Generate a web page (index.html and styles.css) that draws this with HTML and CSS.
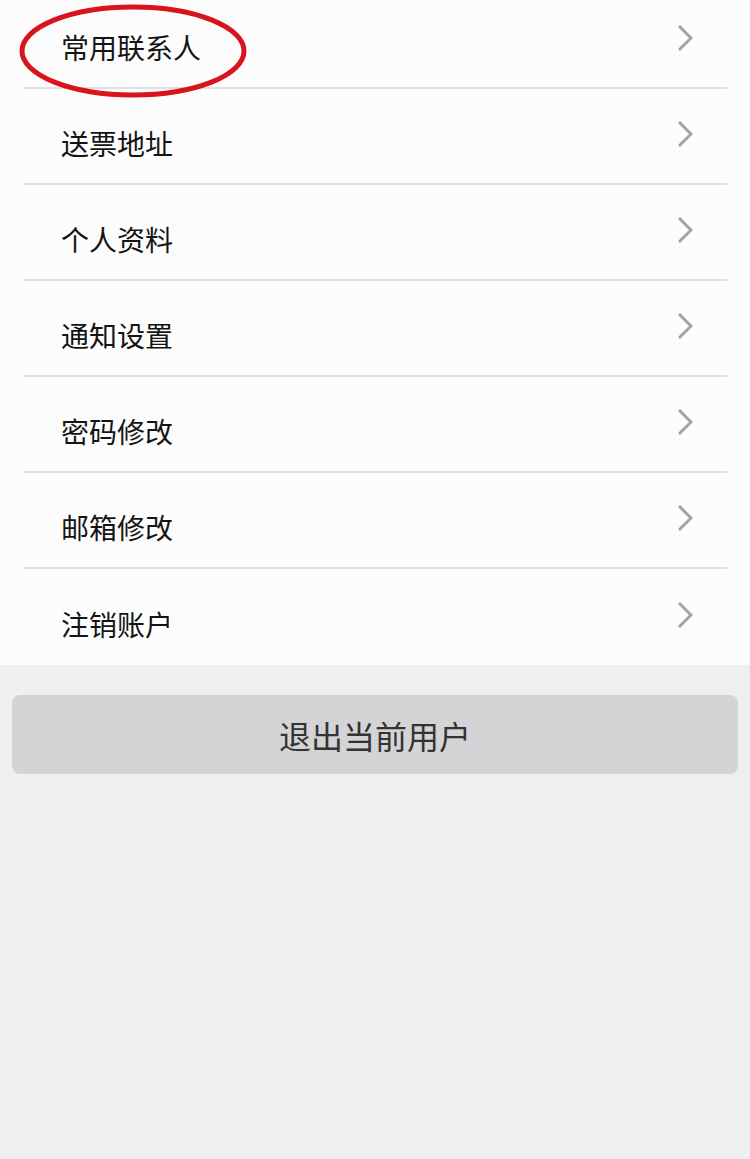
FILE: index.html
```html
<!DOCTYPE html>
<html lang="zh-CN">

<head>
    <meta charset="UTF-8">
    <meta name="viewport" content="width=device-width, initial-scale=1.0">
    <title>账户设置</title>
    <link rel="stylesheet" href="styles.css">
</head>

<body>
    <div class="menu">
        <div class="item">
            <p>常用联系人</p>
            <svg class="arrow" width="16" height="28" viewBox="0 0 16 28"><polyline points="2,2 14,14 2,26" /></svg>
        </div>
        <div class="item">
            <p>送票地址</p>
            <svg class="arrow" width="16" height="28" viewBox="0 0 16 28"><polyline points="2,2 14,14 2,26" /></svg>
        </div>
        <div class="item">
            <p>个人资料</p>
            <svg class="arrow" width="16" height="28" viewBox="0 0 16 28"><polyline points="2,2 14,14 2,26" /></svg>
        </div>
        <div class="item">
            <p>通知设置</p>
            <svg class="arrow" width="16" height="28" viewBox="0 0 16 28"><polyline points="2,2 14,14 2,26" /></svg>
        </div>
        <div class="item">
            <p>密码修改</p>
            <svg class="arrow" width="16" height="28" viewBox="0 0 16 28"><polyline points="2,2 14,14 2,26" /></svg>
        </div>
        <div class="item">
            <p>邮箱修改</p>
            <svg class="arrow" width="16" height="28" viewBox="0 0 16 28"><polyline points="2,2 14,14 2,26" /></svg>
        </div>
        <div class="item last">
            <p>注销账户</p>
            <svg class="arrow" width="16" height="28" viewBox="0 0 16 28"><polyline points="2,2 14,14 2,26" /></svg>
        </div>
    </div>

    <div class="logout-box">
        <button class="logout">退出当前用户</button>
    </div>

    <!-- red circle drawn over the first row -->
    <svg class="mark" width="240" height="104" viewBox="0 0 240 104">
        <ellipse cx="119" cy="51" rx="111" ry="44" fill="none" stroke="#d8141c" stroke-width="5" />
    </svg>
</body>

</html>
```

FILE: styles.css
```css
* {
    margin: 0px;
    padding: 0px;
    box-sizing: border-box;
}

body {
    background-color: #efeef1;
    font-family: "Noto Sans CJK SC", "Noto Sans", sans-serif;
    height: 1159px;
    overflow: hidden;
}

.menu {
    background-color: #fdfcfd;
    margin-top: -7px;
}

.item {
    height: 96px;
    margin-left: 23px;
    margin-right: 23px;
    border-bottom: 2px solid #e1e0e2;
    display: flex;
    align-items: center;
    justify-content: space-between;
}

.item.last {
    height: 96px;
    border-bottom: none;
}

.item p {
    font-size: 28px;
    color: #141414;
    padding-left: 38px;
    padding-top: 14px;
    line-height: 40px;
}

.arrow {
    margin-right: 34px;
    margin-top: -4px;
}

.arrow polyline {
    fill: none;
    stroke: #a3a3a5;
    stroke-width: 3;
}

.logout-box {
    padding: 30px 12px 0px 12px;
}

.logout {
    width: 100%;
    height: 79px;
    border: none;
    border-radius: 8px;
    background-color: #d4d4d6;
    color: #333333;
    font-family: "Noto Sans CJK SC", "Noto Sans", sans-serif;
    font-size: 32px;
}

.mark {
    position: absolute;
    left: 14px;
    top: 0px;
}
```
